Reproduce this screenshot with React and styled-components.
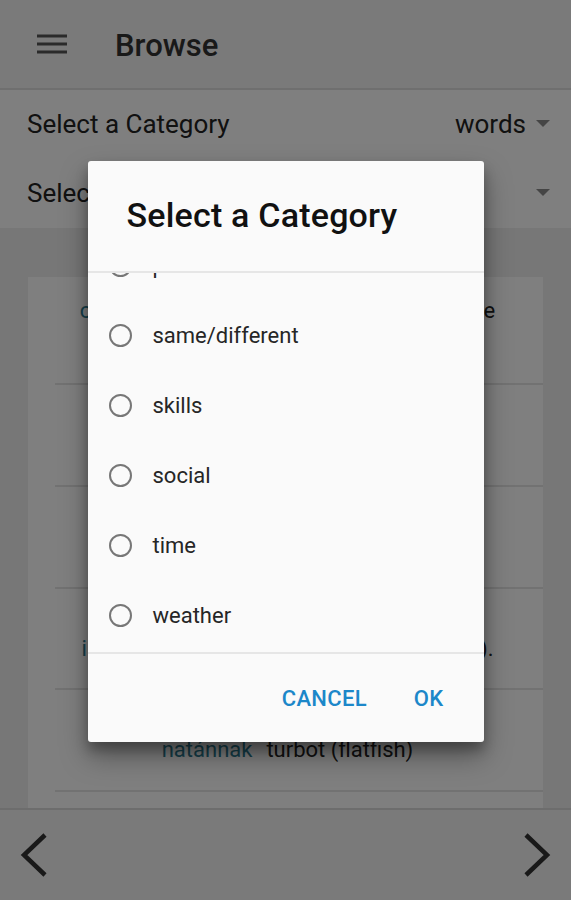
import React, { useEffect, useRef } from "react";
import styled, { createGlobalStyle } from "styled-components";

const GlobalStyle = createGlobalStyle`
  body {
    margin: 0;
    font-family: Roboto, "Noto Sans", sans-serif;
    color: #212121;
  }
`;

const Screen = styled.div`
  position: relative;
  width: 571px;
  height: 900px;
  display: flex;
  flex-direction: column;
  overflow: hidden;
  background: #eeeeee;
`;

const AppBar = styled.header`
  height: 90px;
  flex-shrink: 0;
  display: flex;
  align-items: center;
  gap: 48px;
  padding: 2px 0 0 37px;
  box-sizing: border-box;
  background: #f4f4f4;
  border-bottom: 2px solid #dedede;
`;

const Title = styled.h1`
  margin: 0;
  font-size: 31px;
  font-weight: 500;
  color: #333;
`;

const FilterRow = styled.div`
  height: ${(p) => p.h}px;
  flex-shrink: 0;
  display: flex;
  align-items: center;
  justify-content: space-between;
  padding: 0 21px 0 27px;
  box-sizing: border-box;
  background: #ffffff;
  font-size: 26px;
  color: #222;
`;

const Picker = styled.span`
  display: flex;
  align-items: center;
  gap: 10px;
`;

const Caret = styled.span`
  width: 0;
  height: 0;
  border-left: 7px solid transparent;
  border-right: 7px solid transparent;
  border-top: 7px solid #8a8a8a;
`;

const Content = styled.main`
  flex: 1;
  display: flex;
  padding: 49px 28px 0;
`;

const Card = styled.section`
  flex: 1;
  background: #ffffff;
  padding-left: 27px;
  display: flex;
  flex-direction: column;
`;

const Entry = styled.div`
  height: ${(p) => p.h}px;
  flex-shrink: 0;
  display: flex;
  align-items: center;
  justify-content: center;
  padding: ${(p) => p.top}px 23px 0 0;
  box-sizing: border-box;
  border-bottom: 2px solid #e4e4e4;
  text-align: center;
  white-space: nowrap;
  font-size: 22px;
  line-height: 38px;
  color: #222;
`;

const Word = styled.span`
  color: #2c7f95;
  margin-right: 14px;
`;

const BottomBar = styled.footer`
  height: 90px;
  flex-shrink: 0;
  display: flex;
  align-items: center;
  justify-content: space-between;
  padding: 0 20px;
  background: #f4f4f4;
  border-top: 2px solid #dadada;
`;

const Overlay = styled.div`
  position: absolute;
  inset: 0;
  background: rgba(0, 0, 0, 0.5);
  display: flex;
  align-items: center;
  justify-content: center;
`;

const Dialog = styled.div`
  width: 396px;
  height: 581px;
  margin-top: 3px;
  background: #fafafa;
  border-radius: 3px;
  box-shadow: 0 14px 28px rgba(0, 0, 0, 0.35), 0 8px 12px rgba(0, 0, 0, 0.25);
  display: flex;
  flex-direction: column;
`;

const DialogTitle = styled.h2`
  margin: 0;
  height: 112px;
  flex-shrink: 0;
  display: flex;
  align-items: center;
  padding: 0 0 2px 39px;
  box-sizing: border-box;
  font-size: 34px;
  font-weight: 500;
  letter-spacing: 0.2px;
  color: #111;
  border-bottom: 2px solid #e6e6e6;
`;

const OptionList = styled.div`
  height: 381px;
  flex-shrink: 0;
  box-sizing: border-box;
  padding-bottom: 2px;
  overflow-y: auto;
  scrollbar-width: none;
  border-bottom: 2px solid #e6e6e6;
  &::-webkit-scrollbar {
    display: none;
  }
`;

const Option = styled.label`
  height: 70px;
  display: flex;
  align-items: center;
  gap: 21px;
  padding-left: 21px;
  font-size: 22px;
  color: #262626;
`;

const Radio = styled.span`
  width: 19px;
  height: 19px;
  border: 2.5px solid #777;
  border-radius: 50%;
`;

const Actions = styled.div`
  flex: 1;
  display: flex;
  justify-content: flex-end;
  align-items: center;
  gap: 47px;
  padding: 0 40px 0 0;
`;

const TextButton = styled.button`
  border: none;
  background: none;
  padding: 0;
  font-family: Roboto, sans-serif;
  font-size: 22px;
  font-weight: 500;
  letter-spacing: 0.3px;
  color: #1c87c9;
`;

const Hamburger = () => (
  <svg width="30" height="22" viewBox="0 0 30 22">
    <g stroke="#555" strokeWidth="3">
      <line x1="0" y1="2" x2="30" y2="2" />
      <line x1="0" y1="10" x2="30" y2="10" />
      <line x1="0" y1="18" x2="30" y2="18" />
    </g>
  </svg>
);

const Chevron = ({ dir }) => (
  <svg width="28" height="44" viewBox="0 0 28 44">
    <path
      d={dir === "left" ? "M25 2 L4 22 L25 42" : "M3 2 L24 22 L3 42"}
      fill="none"
      stroke="#333"
      strokeWidth="4.5"
    />
  </svg>
);

const categories = [
  "animals",
  "body",
  "clothing",
  "colors",
  "family",
  "food",
  "numbers",
  "places",
  "same/different",
  "skills",
  "social",
  "time",
  "weather",
];

const entries = [
  { h: 108, top: 0, word: "chahúkwa", gloss: "to be afraid or to fear someone", more: "or be nervous" },
  { h: 102, top: 18, word: "hakwáti", gloss: "to go and see" },
  { h: 102, top: 18, word: "kiyák", gloss: "twins" },
  { h: 101, top: 20, word: "ikhawíiku", gloss: "to be sorry about things (done)." },
  { h: 102, top: 20, word: "natánnak", gloss: "turbot (flatfish)" },
];

export default function App() {
  const listRef = useRef(null);

  useEffect(() => {
    const el = listRef.current;
    if (el) el.scrollTop = el.scrollHeight;
  }, []);

  return (
    <Screen>
      <GlobalStyle />
      <AppBar>
        <Hamburger />
        <Title>Browse</Title>
      </AppBar>
      <FilterRow h={67}>
        <span>Select a Category</span>
        <Picker>
          words
          <Caret />
        </Picker>
      </FilterRow>
      <FilterRow h={71}>
        <span>Select a Subcategory</span>
        <Picker>
          <Caret />
        </Picker>
      </FilterRow>
      <Content>
        <Card>
          {entries.map((e) => (
            <Entry key={e.word} h={e.h} top={e.top}>
              <div>
                <Word>{e.word}</Word>
                {e.gloss}
                {e.more && (
                  <>
                    <br />
                    {e.more}
                  </>
                )}
              </div>
            </Entry>
          ))}
        </Card>
      </Content>
      <BottomBar>
        <Chevron dir="left" />
        <Chevron dir="right" />
      </BottomBar>

      <Overlay>
        <Dialog>
          <DialogTitle>Select a Category</DialogTitle>
          <OptionList ref={listRef}>
            {categories.map((c) => (
              <Option key={c}>
                <Radio />
                {c}
              </Option>
            ))}
          </OptionList>
          <Actions>
            <TextButton>CANCEL</TextButton>
            <TextButton>OK</TextButton>
          </Actions>
        </Dialog>
      </Overlay>
    </Screen>
  );
}
